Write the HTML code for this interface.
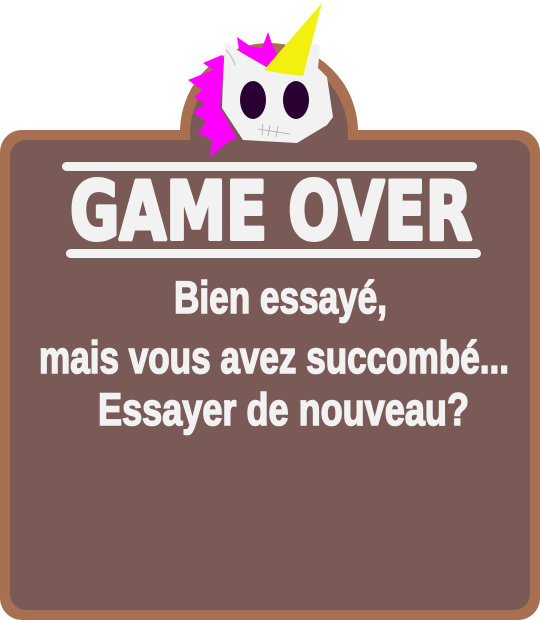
<!DOCTYPE html>
<html><head><meta charset="utf-8"><style>
html,body{margin:0;padding:0;background:#fff;width:540px;height:620px;overflow:hidden}
svg{display:block}
</style></head><body>
<svg width="540" height="620" viewBox="0 0 540 620" xmlns="http://www.w3.org/2000/svg">
<circle cx="269" cy="132" r="89" fill="#a87050"/>
<rect x="0" y="130" width="540" height="490" rx="22" fill="#a87050"/>
<circle cx="269" cy="134" r="79" fill="#7a5a57"/>
<rect x="10" y="140" width="520" height="470" rx="16" fill="#7a5a57"/>
<!-- mane -->
<polygon fill="#ff00ff" points="237,37 250,46 262,48 268,32 272,44 278,56 262,70 240,56"/>
<polygon fill="#ff00ff" points="203,63 222,55 225,60 223,77 220,107 237,138 228,142 221,148 210,157 212,140 198,133 206,122 193,112 205,104 194,97 202,90 188,80 213,70"/>
<!-- head -->
<polygon fill="#f2f2f2" points="225,42 242,53 268,68 317,43 320,47 318,68 327,77 333,117 327,125 297,143 243,140 222,108 223,77 224,60"/>
<path d="M226,50 Q232,56 235,65" stroke="#aaa" stroke-width="0.8" fill="none"/>
<path d="M258,129 L290,134 M263,124 L262,135 M270,125 L268,136 M278,126 L276,137" stroke="#aaa" stroke-width="0.8" fill="none"/>
<!-- horn -->
<polygon fill="#f2f00f" points="264,70 322,3 303,76 285,74"/>
<ellipse cx="253" cy="100" rx="13" ry="19" fill="#2a0033"/>
<ellipse cx="296" cy="100" rx="13" ry="19" fill="#2a0033"/>
<!-- bars -->
<rect x="62" y="162" width="415" height="9" rx="4.5" fill="#f2f2f2"/>
<rect x="66" y="249" width="415" height="9" rx="4.5" fill="#f2f2f2"/>
<text x="70" y="239" textLength="402" lengthAdjust="spacingAndGlyphs" font-family="'DejaVu Sans',sans-serif" font-weight="bold" font-size="80" fill="#f2f2f2" stroke="#f2f2f2" stroke-width="4" stroke-linejoin="round">GAME OVER</text>
<g font-family="'Liberation Sans Narrow','Liberation Sans',sans-serif" font-weight="bold" font-size="45" fill="#f2f2f2" stroke="#f2f2f2" stroke-width="1.6">
<text x="174" y="313" textLength="213" lengthAdjust="spacingAndGlyphs">Bien essayé,</text>
<text x="39" y="373" textLength="470" lengthAdjust="spacingAndGlyphs">mais vous avez succombé...</text>
<text x="98" y="425" textLength="371" lengthAdjust="spacingAndGlyphs">Essayer de nouveau?</text>
</g>
</svg>
</body></html>
